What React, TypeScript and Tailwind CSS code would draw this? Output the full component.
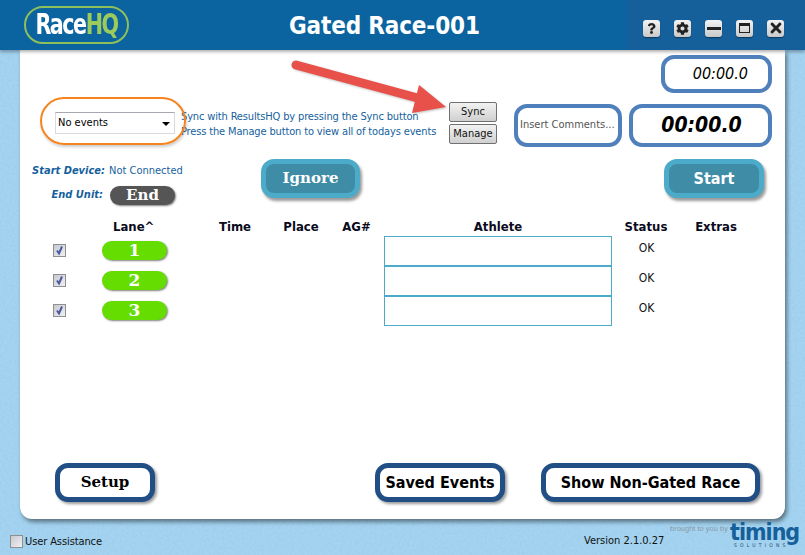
import { FaCog, FaQuestion, FaTimes } from 'react-icons/fa';

const serif = "font-['DejaVu_Serif',serif]";

const lanes = ['1', '2', '3'];

function WinButton({ children }: { children: React.ReactNode }) {
  return (
    <button className="w-[17px] h-[17px] rounded-[3px] bg-gradient-to-b from-[#f4f4f4] to-[#c9c9c9] text-[#222] flex items-center justify-center shadow-[0_1px_1px_rgba(0,0,0,0.4)]">
      {children}
    </button>
  );
}

function Check({ checked }: { checked?: boolean }) {
  return (
    <span className="w-[13px] h-[13px] border border-[#8e8f8f] bg-gradient-to-br from-[#c8c8d0] to-[#f0f0f4] flex items-center justify-center shrink-0">
      {checked && (
        <svg width="11" height="11" viewBox="0 0 11 11">
          <path d="M3 5.5 L5 8.5 L8 1.5" fill="none" stroke="#4a5a9c" strokeWidth="2" />
        </svg>
      )}
    </span>
  );
}

function TealButton({ label, className }: { label: string; className: string }) {
  return (
    <button className={`h-[39px] rounded-[13px] border-[5px] border-[#4cabc8] bg-[#3f8ca6] text-white font-bold shadow-[2px_3px_3px_rgba(0,0,0,0.4)] ${className}`}>
      {label}
    </button>
  );
}

function NavyButton({ label, className }: { label: string; className: string }) {
  return (
    <button className={`h-[39px] rounded-[13px] border-[5px] border-[#214f85] bg-white text-black font-bold shadow-[2px_2px_3px_rgba(0,0,0,0.4)] ${className}`}>
      {label}
    </button>
  );
}

function SmallButton({ label }: { label: string }) {
  return (
    <button className="w-[48px] h-[20px] pb-[1px] rounded-[2px] border border-[#707070] bg-gradient-to-b from-[#f2f2f2] to-[#d0d0d0] text-[11px] text-[#111] leading-none">
      {label}
    </button>
  );
}

export default function App() {
  return (
    <div className="relative w-[805px] h-[555px] overflow-hidden bg-[#a4d4f0] flex flex-col font-['DejaVu_Sans_Condensed','DejaVu_Sans',sans-serif]">
      {/* paper texture */}
      <svg className="absolute inset-0 opacity-50" width="805" height="555">
        <filter id="grain">
          <feTurbulence type="fractalNoise" baseFrequency="0.4" numOctaves="3" />
          <feColorMatrix values="0 0 0 0 0.3  0 0 0 0 0.55  0 0 0 0 0.8  0 0 0 1.4 -0.4" />
        </filter>
        <rect width="805" height="555" filter="url(#grain)" />
      </svg>

      {/* Header */}
      <div className="relative z-10 h-[50px] shrink-0 bg-[#0b64a0] shadow-[0_2px_3px_rgba(0,0,0,0.3)] flex items-center">
        <div className="ml-[24px] w-[105px] h-[38px] rounded-[19px] border-2 border-[#8fbf5a] flex items-center justify-center text-[23px] font-bold tracking-[-1.5px] leading-none -mt-[1px]">
          <span className="inline-block scale-y-[1.2]">
            <span className="text-white">Race</span>
            <span className="text-[#9ccb5c]">HQ</span>
          </span>
        </div>
        <div className="ml-[160px] text-white font-bold text-[24px] tracking-[-0.15px] mt-[1px]">
          Gated Race-001
        </div>
        <div className="ml-auto h-full w-[178px] bg-[#155f9b] flex items-center gap-[14px] pl-[16px] pt-[6px]">
          <WinButton><FaQuestion size={11} /></WinButton>
          <WinButton><FaCog size={13} /></WinButton>
          <WinButton><span className="w-[14px] h-[3px] bg-[#222]" /></WinButton>
          <WinButton><span className="w-[11px] h-[10px] border border-t-[3px] border-[#222]" /></WinButton>
          <WinButton><FaTimes size={16} /></WinButton>
        </div>
      </div>

      {/* Main panel */}
      <div className="relative ml-[20px] w-[765px] h-[469px] shrink-0 bg-white rounded-b-[12px] shadow-[2px_3px_4px_rgba(0,0,0,0.45)] flex flex-col">
        <div className="flex justify-end pr-[13px] pt-[5px]">
          <div className="w-[111px] h-[38px] rounded-[13px] border-[4px] border-[#5080bb] flex items-center justify-end pr-[20px] italic text-[16px] text-black">
            00:00.0
          </div>
        </div>

        <div className="flex h-[43px] mt-[11px]">
          <div className="relative ml-[35px] mt-[8px] w-[120px] h-[22px] border border-[#d8d8e0] border-t-[#a8a8b0] flex items-center justify-between pl-[2px] pr-[4px] pt-[1px] text-[11px] text-black">
            No events
            <span className="w-0 h-0 border-x-[4px] border-x-transparent border-t-[4px] border-t-black" />
            {/* orange callout */}
            <div className="absolute -left-[16px] -top-[16px] w-[146px] h-[48px] rounded-[24px] border-[2px] border-[#f5841f] shadow-[1px_2px_3px_rgba(0,0,0,0.2)]" />
          </div>
          <div className="ml-[6px] mt-[5px] w-[268px] text-[11px] leading-[15px] tracking-[-0.15px] text-[#165f9e] whitespace-nowrap">
            <div>Sync with ResultsHQ by pressing the Sync button</div>
            <div>Press the Manage button to view all of todays events</div>
          </div>
          <div className="-mt-[2px] flex flex-col gap-[2px]">
            <SmallButton label="Sync" />
            <SmallButton label="Manage" />
          </div>
          <div className="ml-[17px] w-[108px] h-[43px] rounded-[13px] border-[4px] border-[#5080bb] flex items-center pl-[2px] text-[11px] text-[#555] whitespace-nowrap">
            Insert Comments...
          </div>
          <div className="ml-[7px] w-[143px] h-[43px] rounded-[13px] border-[4px] border-[#5080bb] flex items-center justify-center pl-[2px] italic font-bold text-[21px] text-black">
            00:00.0
          </div>
        </div>

        <div className="flex mt-[12px] h-[50px]">
          <div className="w-[241px] pl-[12px]">
            <div className="flex items-center h-[22px] mt-[1px] text-[11px]">
              <span className="w-[73px] text-right italic font-bold text-[#165f9e] whitespace-nowrap">Start Device:</span>
              <span className="ml-[4px] text-[#165f9e] whitespace-nowrap">Not Connected</span>
            </div>
            <div className="flex items-center mt-[4px] text-[11px]">
              <span className="w-[71px] text-right italic font-bold text-[#165f9e]">End Unit:</span>
              <span className={`ml-[7px] w-[65px] h-[19px] rounded-full bg-[#555] text-white font-bold text-[15px] leading-[19px] text-center shadow-[1px_1px_2px_rgba(0,0,0,0.5)] ${serif}`}>
                End
              </span>
            </div>
          </div>
          <TealButton label="Ignore" className={`w-[99px] text-[15px] ${serif}`} />
          <TealButton label="Start" className="ml-[304px] w-[100px] text-[16px]" />
        </div>

        {/* Lane table */}
        <div className="mt-[9px] grid grid-cols-[62px_123px_60px_72px_47px_228px_68px_72px] font-bold text-[13px] leading-[18px] text-[#0a0a20] text-center">
          <div />
          <div className="text-left pl-[31px]">Lane^</div>
          <div>Time</div>
          <div>Place</div>
          <div className="pr-[8px]">AG#</div>
          <div>Athlete</div>
          <div>Status</div>
          <div>Extras</div>
        </div>
        <div className="grid grid-cols-[62px_123px_60px_72px_47px_228px_68px_72px] auto-rows-[30px]">
          {lanes.map((lane) => (
            <div key={lane} className="contents">
              <div className="flex items-center pl-[33px] pb-[2px]">
                <Check checked />
              </div>
              <div className="flex items-center pb-[1px] pl-[20px]">
                <span className={`w-[65px] h-[19px] rounded-full bg-[#66dd00] text-white font-bold text-[17px] leading-[18px] text-center shadow-[1px_1px_2px_rgba(0,0,0,0.5)] ${serif}`}>
                  {lane}
                </span>
              </div>
              <div />
              <div />
              <div />
              <div className="border border-[#4cabc8]" />
              <div className="text-center text-[12px] text-[#111] pt-[3px] pl-[1px]">OK</div>
              <div />
            </div>
          ))}
        </div>

        <div className="mt-auto mb-[17px] flex">
          <NavyButton label="Setup" className={`ml-[35px] w-[100px] text-[15px] ${serif}`} />
          <NavyButton label="Saved Events" className="ml-[220px] w-[130px] text-[16px]" />
          <NavyButton label="Show Non-Gated Race" className="ml-[36px] w-[219px] text-[16px]" />
        </div>

        {/* Red arrow annotation */}
        <svg className="absolute left-[270px] top-0 drop-shadow-[1px_1px_1px_rgba(0,0,0,0.25)]" width="165" height="70">
          <path d="M6 15 L135 50" stroke="#e8504a" strokeWidth="9" strokeLinecap="round" fill="none" />
          <polygon points="129,35 156,57 122,63" fill="#e8504a" />
        </svg>
      </div>

      {/* Footer */}
      <div className="relative flex-1 flex text-[11px] text-[#111]">
        <div className="ml-[10px] mt-[16px] flex items-center gap-[2px] h-[13px]">
          <Check />
          <span className="tracking-[-0.1px] pt-[1px]">User Assistance</span>
        </div>
        <span className="absolute left-[584px] top-[14px]">Version 2.1.0.27</span>
        <span className="absolute left-[670px] top-[4px] text-[7.5px] text-[#8a9aa6] font-['Liberation_Sans',sans-serif] whitespace-nowrap">brought to you by</span>
        <div className="absolute left-[730px] top-[3px] w-[70px] text-[#155f9b]">
          <div className="text-[23px] leading-[21px] font-bold tracking-[-1px]">timing</div>
          <div className="text-[5px] leading-[5px] pl-[4px] tracking-[3.2px] text-[#244a6a] whitespace-nowrap">SOLUTIONS</div>
        </div>
      </div>
    </div>
  );
}
